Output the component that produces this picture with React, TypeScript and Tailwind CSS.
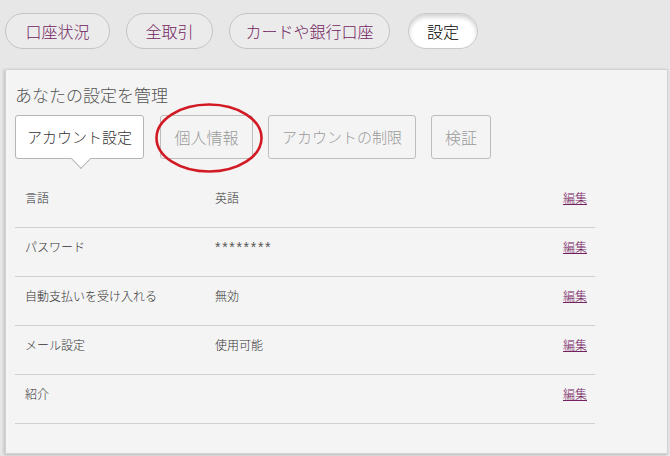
const font = { fontFamily: '"Noto Sans CJK JP", "Liberation Sans", sans-serif' };

const pills = [
  { label: '口座状況', w: 'w-[105px]' },
  { label: '全取引', w: 'w-[87px]' },
  { label: 'カードや銀行口座', w: 'w-[161px]' },
];

const rows = [
  { name: '言語', value: '英語' },
  { name: 'パスワード', value: '********' },
  { name: '自動支払いを受け入れる', value: '無効' },
  { name: 'メール設定', value: '使用可能' },
  { name: '紹介', value: '' },
];

export default function App() {
  return (
    <div className="relative w-[670px] h-[456px] overflow-hidden bg-[#e7e7e7] font-light" style={font}>
      {/* top navigation pills */}
      <nav className="flex items-center pt-[13px] pl-[5px]">
        {pills.map((p, i) => (
          <div
            key={p.label}
            className={`${p.w} h-[36px] flex items-center justify-center rounded-full border border-[#c4c4c4] bg-[#ebebeb] text-[16px] text-[#72245f] ${i > 0 ? 'ml-[16px]' : ''}`}
          >
            {p.label}
          </div>
        ))}
        <div className="ml-[18px] w-[70px] h-[36px] flex items-center justify-center rounded-full border border-[#c9c9c9] bg-white text-[16px] text-black shadow-[inset_0_3px_4px_rgba(0,0,0,0.18)]">
          設定
        </div>
      </nav>

      {/* settings panel */}
      <section className="mt-[20px] ml-[5px] w-[663px] h-[385px] bg-[#f4f4f4] border border-[#d2d2d2] shadow-[-1px_1px_3px_rgba(0,0,0,0.2)] pl-[9px] pt-[13px]">
        <h1 className="text-[17px] leading-[24px] text-[#555]">あなたの設定を管理</h1>

        <div className="flex mt-[8px]">
          <div className="relative w-[129px] h-[44px] flex items-center justify-center bg-white border border-[#b5b5b5] rounded-[3px] text-[15px] text-[#333]">
            アカウント設定
            <span className="absolute left-[58px] -bottom-[8px] w-[14px] h-[14px] rotate-45 bg-white border-r border-b border-[#b5b5b5]" />
          </div>
          <div className="ml-[16px] w-[93px] h-[44px] flex items-center justify-center border border-[#bdbdbd] rounded-[3px] text-[16px] text-[#9a9a9a]">
            個人情報
          </div>
          <div className="ml-[15px] w-[148px] h-[44px] flex items-center justify-center border border-[#bdbdbd] rounded-[3px] text-[15px] text-[#9a9a9a]">
            アカウントの制限
          </div>
          <div className="ml-[15px] w-[60px] h-[44px] flex items-center justify-center border border-[#bdbdbd] rounded-[3px] text-[16px] text-[#9a9a9a]">
            検証
          </div>
        </div>

        <div className="mt-[20px] w-[580px]">
          {rows.map((r) => (
            <div key={r.name} className="flex h-[49px] border-b border-[#d0d0d0] pt-[11px] text-[12px] leading-[16px] text-[#333]">
              <div className="w-[200px] pl-[10px]">{r.name}</div>
              {r.value.startsWith('*') ? (
                <div className="flex-1 text-[14px] font-normal tracking-[1.7px] text-[#555]" style={{ fontFamily: '"Liberation Sans", sans-serif' }}>
                  {r.value}
                </div>
              ) : (
                <div className="flex-1">{r.value}</div>
              )}
              <a className="pr-[8px] text-[#74215f] underline">編集</a>
            </div>
          ))}
        </div>
      </section>

      {/* red annotation circle */}
      <svg className="absolute left-[153px] top-[101px]" width="114" height="74" viewBox="0 0 114 74">
        <ellipse cx="56" cy="37" rx="52.5" ry="33.5" fill="none" stroke="#d21a24" strokeWidth="2.6" />
      </svg>
    </div>
  );
}
